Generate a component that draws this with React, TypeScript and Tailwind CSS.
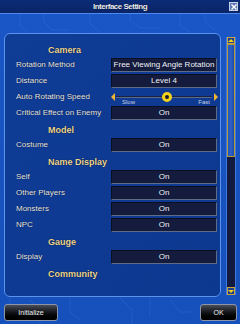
import React from 'react';

type Row =
    | { kind: 'header'; text: string }
    | { kind: 'value'; label: string; value: string }
    | { kind: 'slider'; label: string };

const rows: Row[] = [
    { kind: 'header', text: 'Camera' },
    { kind: 'value', label: 'Rotation Method', value: 'Free Viewing Angle Rotation' },
    { kind: 'value', label: 'Distance', value: 'Level 4' },
    { kind: 'slider', label: 'Auto Rotating Speed' },
    { kind: 'value', label: 'Critical Effect on Enemy', value: 'On' },
    { kind: 'header', text: 'Model' },
    { kind: 'value', label: 'Costume', value: 'On' },
    { kind: 'header', text: 'Name Display' },
    { kind: 'value', label: 'Self', value: 'On' },
    { kind: 'value', label: 'Other Players', value: 'On' },
    { kind: 'value', label: 'Monsters', value: 'On' },
    { kind: 'value', label: 'NPC', value: 'On' },
    { kind: 'header', text: 'Gauge' },
    { kind: 'value', label: 'Display', value: 'On' },
    { kind: 'header', text: 'Community' },
];

const Circuit = () => (
    <svg className="absolute inset-0 pointer-events-none" width="240" height="324" viewBox="0 0 240 324">
        <g stroke="#3d78dc" strokeWidth="1" fill="none" opacity="0.35">
            <path d="M20 14 V26 L28 32 M44 14 V22 L52 30 H70 M90 14 V24 L100 32 M130 14 V20 L140 28 H160 M180 14 V26 L190 32 M205 14 V22 L215 30" />
            <path d="M10 298 V310 M30 300 L40 310 V324 M70 298 V312 L80 320 M120 298 L132 310 V324 M150 298 V316 M170 300 L180 312 H192" />
        </g>
    </svg>
);

const ValueBox = ({ value }: { value: string }) => (
    <div className="w-[106px] h-[14px] mt-[1px] bg-[#141b3c] border border-t-[#0a0f24] border-l-[#0a0f24] border-b-[#5d6d86] border-r-[#5d6d86] flex items-center justify-center text-[8px] leading-none text-[#eef0f6] whitespace-nowrap overflow-hidden">
        {value}
    </div>
);

const Slider = () => (
    <div className="relative w-[106px] h-[16px]">
        {/* left arrow */}
        <div className="absolute left-0 top-[4px] w-0 h-0 border-y-[4px] border-y-transparent border-r-[4px] border-r-[#f2b632]" />
        {/* track */}
        <div className="absolute left-[5px] right-[5px] top-[7px] h-[2px] bg-[#1a2244] border-b border-[#5b6a86]" />
        {/* knob */}
        <div className="absolute left-[51px] top-[3px] w-[10px] h-[10px] rounded-full bg-[#1a1a2a] border-[3px] border-[#f4d21a]" />
        {/* right arrow */}
        <div className="absolute right-[-1px] top-[4px] w-0 h-0 border-y-[4px] border-y-transparent border-l-[4px] border-l-[#f2b632]" />
        <span className="absolute left-[11px] top-[10px] text-[6px] leading-none text-[#c8d0e0]">Slow</span>
        <span className="absolute right-[7px] top-[10px] text-[6px] leading-none text-[#c8d0e0]">Fast</span>
    </div>
);

export default function App() {
    return (
        <div className="relative w-[240px] h-[324px] overflow-hidden bg-gradient-to-b from-[#1a56c6] to-[#1650bb] font-['Liberation_Sans',sans-serif]">
            <Circuit />

            {/* Title bar */}
            <div className="relative h-[14px] bg-gradient-to-b from-[#0c2c78] to-[#0a2466] border-b border-[#4d8af0] flex items-center justify-center">
                <span className="text-[8px] font-bold tracking-[-0.5px] text-[#e8ecf6] [text-shadow:0_0_1px_#000]">
                    Interface Setting
                </span>
                <div className="absolute right-[2px] top-[2px] w-[9px] h-[9px] bg-[#5a78b8] border border-[#c8d4ec] flex items-center justify-center">
                    <svg width="6" height="6" viewBox="0 0 6 6">
                        <path d="M0.5 0.5 L5.5 5.5 M5.5 0.5 L0.5 5.5" stroke="#fff" strokeWidth="1.4" />
                    </svg>
                </div>
            </div>

            {/* Content + scrollbar */}
            <div className="relative flex items-start mt-[19px] ml-[4px]">
                <div className="w-[217px] h-[264px] rounded-[6px] border border-[#5a92ec] bg-gradient-to-br from-[#0f3c95] to-[#0d3890] overflow-hidden pt-[7px]">
                    {rows.map((r, i) => {
                        if (r.kind === 'header') {
                            return (
                                <div key={i} className="h-[16px] pl-[43px] pt-[3px] text-[9px] leading-[13px] font-bold text-[#ead79c] [text-shadow:0_0_1px_#000]">
                                    {r.text}
                                </div>
                            );
                        }
                        return (
                            <div key={i} className="h-[16px] flex items-start">
                                <div className="w-[106px] pl-[11px] h-[16px] flex items-center text-[8px] text-[#e6e9f2] whitespace-nowrap [text-shadow:0_0_1px_#000]">
                                    {r.label}
                                </div>
                                {r.kind === 'value' ? <ValueBox value={r.value} /> : <Slider />}
                            </div>
                        );
                    })}
                </div>

                {/* Scrollbar */}
                <div className="ml-[5px] mt-[4px] w-[10px] h-[258px] flex flex-col bg-[#121a40] border-x border-[#3f7ae0]">
                    <div className="h-[7px] border border-[#c9a43a] bg-[#1d3f8e] flex items-center justify-center">
                        <div className="w-0 h-0 border-x-[3px] border-x-transparent border-b-[3px] border-b-[#f4d21a]" />
                    </div>
                    <div className="h-[113px] border border-[#b8983a] bg-gradient-to-r from-[#2356b8] via-[#2d62c8] to-[#1d4aa4]" />
                    <div className="flex-1" />
                    <div className="h-[8px] border border-[#c9a43a] bg-[#1d3f8e] flex items-center justify-center">
                        <div className="w-0 h-0 border-x-[3px] border-x-transparent border-t-[3px] border-t-[#f4d21a]" />
                    </div>
                </div>
            </div>

            {/* Bottom buttons */}
            <div className="relative flex justify-between mt-[7px] px-[4px] pr-[3px]">
                <button className="w-[54px] h-[17px] rounded-[3px] border border-[#8c95a8] bg-gradient-to-b from-[#4a4e58] via-[#121418] to-[#000] text-[7px] text-[#f0f0f0] leading-none">
                    Initialize
                </button>
                <button className="w-[37px] h-[17px] rounded-[3px] border border-[#8c95a8] bg-gradient-to-b from-[#4a4e58] via-[#121418] to-[#000] text-[7px] text-[#f0f0f0] leading-none">
                    OK
                </button>
            </div>
        </div>
    );
}
